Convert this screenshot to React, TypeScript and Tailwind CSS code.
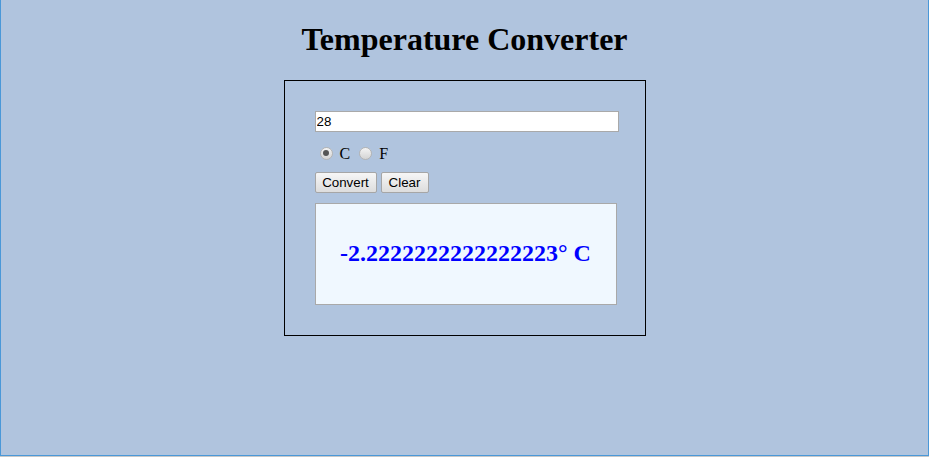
import { useState } from "react";

function Radio({ checked, onClick }: { checked: boolean; onClick: () => void }) {
  return (
    <span
      onClick={onClick}
      className="flex items-center justify-center w-[13px] h-[13px] shrink-0 rounded-full border border-[#b4b4b4] bg-gradient-to-b from-[#f4f4f4] to-[#d4d4d4] ml-[5px] mr-[7px] cursor-default"
    >
      {checked && <span className="w-[6px] h-[6px] rounded-full bg-[#555555]" />}
    </span>
  );
}

export default function App() {
  const [value, setValue] = useState("28");
  const [unit, setUnit] = useState<"C" | "F">("C");
  const [result, setResult] = useState("-2.2222222222222223° C");

  const convert = () => {
    const n = parseFloat(value);
    if (isNaN(n)) return setResult("");
    setResult(unit === "C" ? `${(n - 32) * (5 / 9)}° C` : `${n * (9 / 5) + 32}° F`);
  };

  return (
    <div className="h-[457px] bg-[#c8c8c8] font-['Liberation_Serif',serif] text-black">
      <div className="h-[456px] bg-[#b0c4de] border-x border-b border-[#4a98d8] overflow-hidden">
        {/* Heading */}
        <h1 className="mt-[21px] mb-[22px] text-center text-[32px] font-bold leading-[37px]">
          Temperature Converter
        </h1>

        {/* Converter box */}
        <div className="mx-auto w-[362px] border border-black p-[30px]">
          <input
            value={value}
            onChange={(e) => setValue(e.target.value)}
            className="block w-[304px] h-[21px] border border-[#a9a9a9] bg-white px-[1px] font-['Liberation_Sans',sans-serif] text-[13.33px] outline-none"
          />

          <div className="mt-[11px] flex h-[20px] items-center text-[16px] leading-[20px]">
            <Radio checked={unit === "C"} onClick={() => setUnit("C")} />
            <span className="mr-[4px] pt-[2px]">C</span>
            <Radio checked={unit === "F"} onClick={() => setUnit("F")} />
            <span className="pt-[2px]">F</span>
          </div>

          <div className="mt-[9px] flex gap-[4px] font-['Liberation_Sans',sans-serif] text-[13.33px]">
            <button
              onClick={convert}
              className="h-[21px] w-[62px] rounded-[2px] border border-[#a6a6a6] bg-gradient-to-b from-[#f6f6f6] to-[#dddddd] leading-[19px]"
            >
              Convert
            </button>
            <button
              onClick={() => {
                setValue("");
                setResult("");
              }}
              className="h-[21px] w-[48px] rounded-[2px] border border-[#a6a6a6] bg-gradient-to-b from-[#f6f6f6] to-[#dddddd] leading-[19px]"
            >
              Clear
            </button>
          </div>

          <div className="mt-[10px] flex h-[102px] w-[302px] items-center justify-center border border-[#a9a9a9] bg-[#f0f8ff] pb-[2px]">
            <span className="text-[24px] font-bold leading-[28px] text-[#0000ff]">{result}</span>
          </div>
        </div>
      </div>
    </div>
  );
}
